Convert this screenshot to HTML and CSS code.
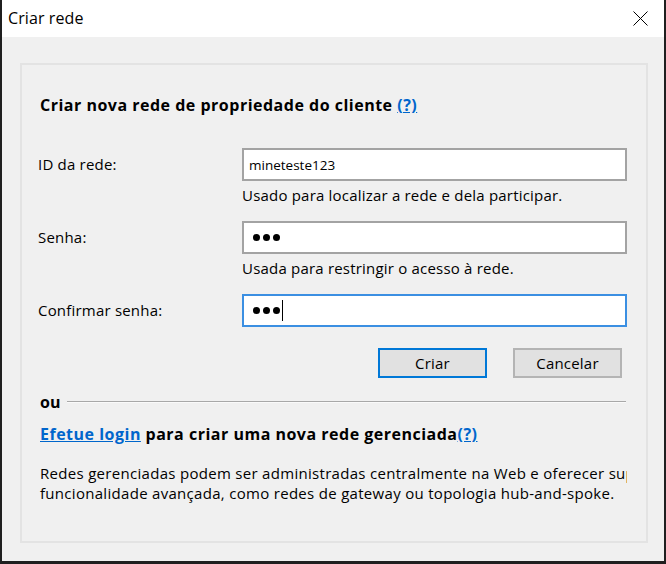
FILE: index.html
```html
<!DOCTYPE html>
<html lang="pt">
<head>
<meta charset="utf-8">
<title>Criar rede</title>
<link rel="stylesheet" href="styles.css">
</head>
<body>
<div class="window">
  <div class="titlebar">
    <span class="title">Criar rede</span>
    <svg class="close" viewBox="0 0 15 15" width="15" height="15"><path d="M0.5 0.5 L14.5 14.5 M14.5 0.5 L0.5 14.5" stroke="#000" stroke-width="1" fill="none"/></svg>
  </div>
  <div class="client">
    <div class="group">
      <div class="heading">Criar nova rede de propriedade do cliente <a class="link">(?)</a></div>
      <div class="form">
        <div class="label">ID da rede:</div>
        <div class="field">
          <div class="input"><span class="value">mineteste123</span></div>
          <div class="hint">Usado para localizar a rede e dela participar.</div>
        </div>
        <div class="label">Senha:</div>
        <div class="field">
          <div class="input"><span class="dots"><i></i><i></i><i></i></span></div>
          <div class="hint">Usada para restringir o acesso à rede.</div>
        </div>
        <div class="label">Confirmar senha:</div>
        <div class="field">
          <div class="input focused"><span class="dots"><i></i><i></i><i></i></span><span class="caret"></span></div>
        </div>
      </div>
      <div class="buttons">
        <button class="btn default">Criar</button>
        <button class="btn">Cancelar</button>
      </div>
      <div class="sep"><span class="ou">ou</span><span class="line"></span></div>
      <div class="managed"><a class="link">Efetue login</a> para criar uma nova rede gerenciada<a class="link">(?)</a></div>
      <div class="desc">
        <div class="dl">Redes gerenciadas podem ser administradas centralmente na Web e oferecer suporte a</div>
        <div class="dl">funcionalidade avançada, como redes de gateway ou topologia hub-and-spoke.</div>
      </div>
    </div>
  </div>
</div>
</body>
</html>
```
FILE: styles.css
```css
html, body {
  margin: 0;
  padding: 0;
}
body {
  background: #1f1f1f;
  width: 666px;
  height: 564px;
  overflow: hidden;
  font-family: "Open Sans", "Noto Sans", sans-serif;
  font-size: 15px;
  letter-spacing: 0.2px;
  color: #000;
}
.window {
  margin-left: 2px;
  width: 662px;
  height: 561px;
  background: #f0f0f0;
  display: flex;
  flex-direction: column;
}
.titlebar {
  height: 37px;
  flex: none;
  background: #fff;
  display: flex;
  align-items: center;
  justify-content: space-between;
  padding: 0 16px 0 6px;
}
.title {
  font-size: 16px;
  letter-spacing: 0.1px;
  margin-top: -1px;
}
.close {
  display: block;
  margin-top: -1px;
}
.client {
  flex: 1;
  padding: 26px 16px 18px 18px;
  display: flex;
  min-width: 0;
}
.group {
  flex: 1;
  min-width: 0;
  border: 2px solid #e3e3e3;
  display: flex;
  flex-direction: column;
  padding-left: 16px;
}
.heading {
  margin-top: 30px;
  line-height: 20px;
  padding-left: 2px;
  font-weight: 700;
  font-size: 16px;
  letter-spacing: 0.5px;
}
.link {
  color: #0066cc;
  text-decoration: underline;
  font-weight: 700;
}
.form {
  margin-top: 33px;
  display: grid;
  grid-template-columns: 204px 385px;
  row-gap: 16px;
}
.label {
  line-height: 33px;
}
.input {
  box-sizing: border-box;
  height: 33px;
  background: #fff;
  border: 2px solid #a3a3a3;
  display: flex;
  align-items: center;
  padding-left: 5px;
}
.input.focused {
  border-color: #3b8fe2;
}
.value {
  line-height: 20px;
  font-size: 13.5px;
  letter-spacing: 0;
}
.dots {
  display: flex;
  gap: 3px;
  padding-left: 4px;
}
.dots i {
  display: block;
  width: 7px;
  height: 7px;
  border-radius: 50%;
  background: #000;
}
.caret {
  width: 1px;
  height: 21px;
  background: #000;
  margin-left: 2px;
}
.hint {
  margin-top: 4px;
  line-height: 20px;
}
.buttons {
  margin-top: 21px;
  display: flex;
  justify-content: flex-end;
  gap: 26px;
  padding-right: 24px;
}
.btn {
  box-sizing: border-box;
  width: 109px;
  height: 30px;
  background: #e1e1e1;
  border: 2px solid #b4b4b4;
  font-family: inherit;
  font-size: 15px;
  letter-spacing: 0.2px;
  color: #000;
  padding: 0;
}
.btn.default {
  border-color: #0078d7;
}
.sep {
  margin-top: 14px;
  height: 20px;
  display: flex;
  align-items: center;
  padding-left: 2px;
  margin-right: 20px;
}
.ou {
  font-weight: 700;
  font-size: 16px;
  line-height: 20px;
}
.line {
  flex: 1;
  height: 1px;
  background: #a8a8a8;
  border-bottom: 1px solid #fafafa;
  margin-left: 6px;
}
.managed {
  margin-top: 12px;
  line-height: 20px;
  padding-left: 2px;
  font-weight: 700;
  font-size: 16px;
  letter-spacing: 0.5px;
}
.desc {
  margin-top: 19px;
  padding-left: 2px;
  width: 587px;
  overflow: hidden;
}
.dl {
  line-height: 20px;
  white-space: nowrap;
  letter-spacing: 0.3px;
}
```
